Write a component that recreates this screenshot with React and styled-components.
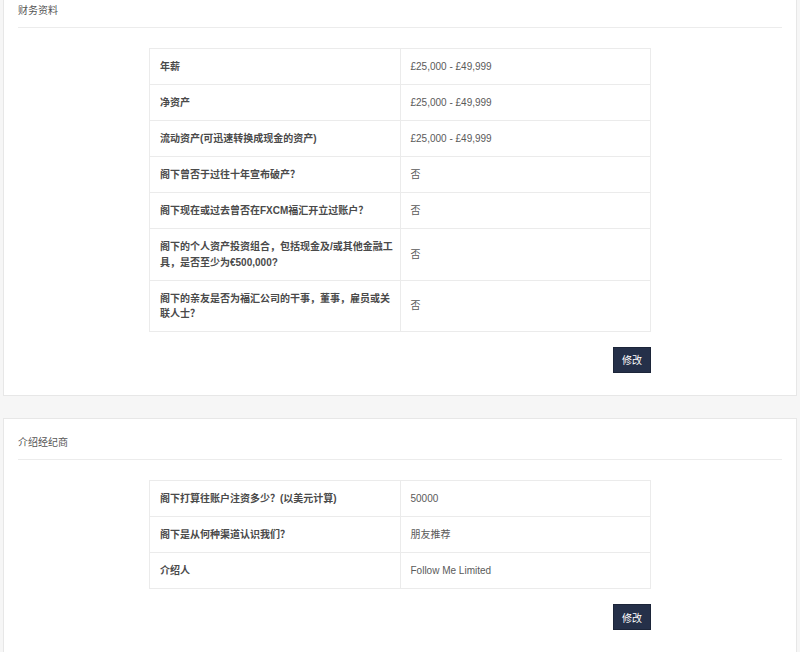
import React from "react";
import styled, { createGlobalStyle } from "styled-components";

const Global = createGlobalStyle`
  html, body { margin: 0; padding: 0; background: #f6f6f6; }
  body { font-family: "Liberation Sans", "Noto Sans CJK SC", sans-serif; font-size: 10px; color: #555; overflow: hidden; }
`;

const Page = styled.div`
  padding: 0 3px;
  margin-top: -14px;
  display: flex;
  flex-direction: column;
  gap: 22px;
`;

const Panel = styled.section`
  background: #fff;
  border: 1px solid #e7e7e7;
  padding: 0 14px 22px;
`;

const PanelHeader = styled.div`
  padding-top: 17px;
  padding-bottom: 9px;
  border-bottom: 1px solid #ececec;
  line-height: 14px;
  font-size: 10px;
  color: #555;
`;

const Body = styled.div`
  padding-top: 20px;
  display: flex;
  flex-direction: column;
  align-items: center;
`;

const Table = styled.table`
  width: 502px;
  border-collapse: collapse;
  table-layout: fixed;
`;

const Cell = styled.td`
  border: 1px solid #ebebeb;
  padding: 10px 10px;
  line-height: 15.1px;
  font-size: 10px;
  vertical-align: middle;
  white-space: ${(p) => (p.$label ? "pre" : "normal")};
  color: ${(p) => (p.$label ? "#4a4a4a" : "#5a5a5a")};
  font-weight: ${(p) => (p.$label ? 700 : 400)};
`;

const Actions = styled.div`
  width: 502px;
  display: flex;
  justify-content: flex-end;
  margin-top: 15px;
`;

const Button = styled.button`
  width: 38px;
  height: 26px;
  padding: 0;
  background: #253049;
  border: 1px solid #1c2539;
  color: #fff;
  font-family: "Liberation Sans", "Noto Sans CJK SC", sans-serif;
  font-size: 10px;
  cursor: pointer;
`;

const financial = [
  ["年薪", "£25,000 - £49,999"],
  ["净资产", "£25,000 - £49,999"],
  ["流动资产(可迅速转换成现金的资产)", "£25,000 - £49,999"],
  ["阁下曾否于过往十年宣布破产？", "否"],
  ["阁下现在或过去曾否在FXCM福汇开立过账户？", "否"],
  ["阁下的个人资产投资组合，包括现金及/或其他金融工\n具，是否至少为€500,000?", "否"],
  ["阁下的亲友是否为福汇公司的干事，董事，雇员或关\n联人士？", "否"],
];

const broker = [
  ["阁下打算往账户注资多少？(以美元计算)", "50000"],
  ["阁下是从何种渠道认识我们？", "朋友推荐"],
  ["介绍人", "Follow Me Limited"],
];

function InfoPanel({ title, rows }) {
  return (
    <Panel>
      <PanelHeader>{title}</PanelHeader>
      <Body>
        <Table>
          <tbody>
            {rows.map(([k, v]) => (
              <tr key={k}>
                <Cell $label>{k}</Cell>
                <Cell>{v}</Cell>
              </tr>
            ))}
          </tbody>
        </Table>
        <Actions>
          <Button>修改</Button>
        </Actions>
      </Body>
    </Panel>
  );
}

export default function App() {
  return (
    <>
      <Global />
      <Page>
        <InfoPanel title="财务资料" rows={financial} />
        <InfoPanel title="介绍经纪商" rows={broker} />
      </Page>
    </>
  );
}
